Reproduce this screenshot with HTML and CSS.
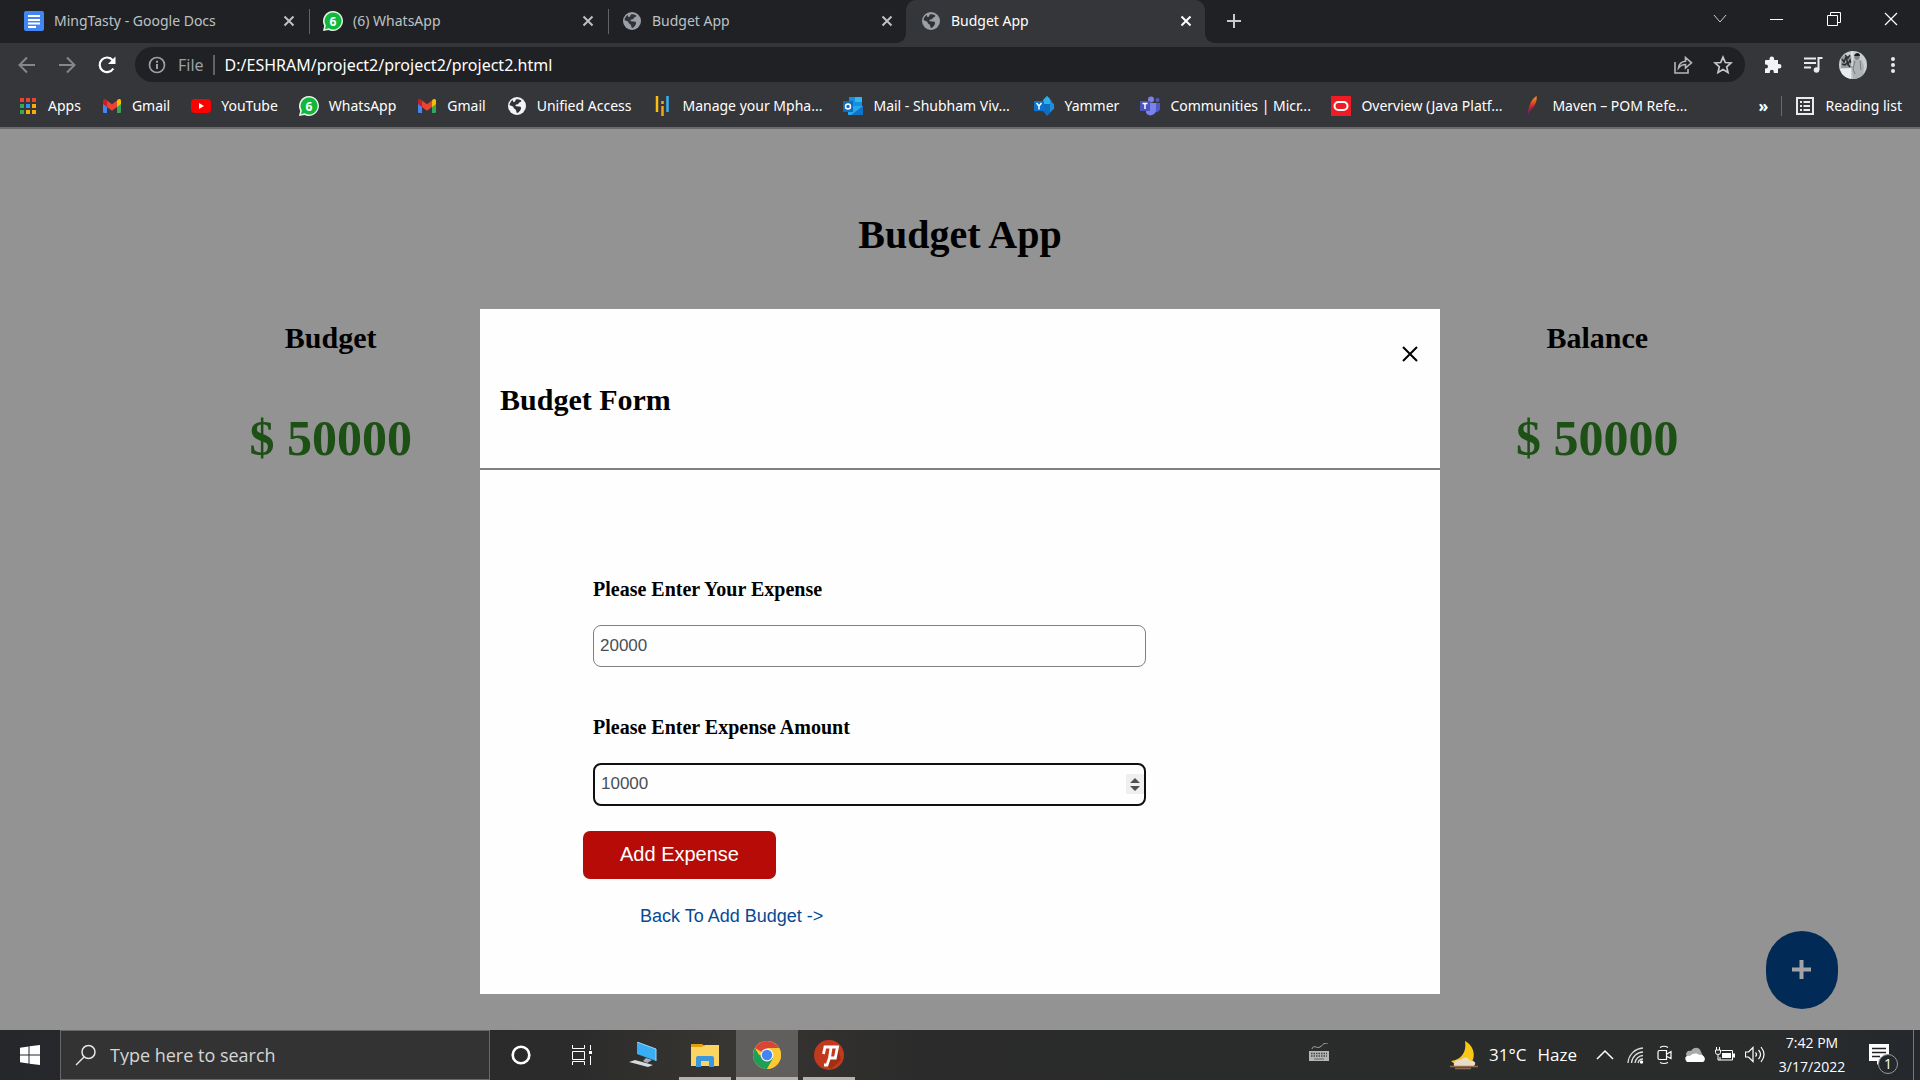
FILE: index.html
```html
<!DOCTYPE html>
<html lang="en">
<head>
<meta charset="utf-8">
<title>Budget App</title>
<link rel="stylesheet" href="styles.css">
</head>
<body>
<svg class="defs" aria-hidden="true">
  <symbol id="x" viewBox="0 0 12 12"><path d="M1.500 1.500l9 9M10.500 1.500l-9 9" fill="none" stroke="currentColor" stroke-width="2"/></symbol>
  <symbol id="globe" viewBox="0 0 20 20"><circle cx="10" cy="10" r="9" fill="currentColor"/><path class="land" d="M9 3.500c2-.8 4.500 0 5.500 1.500-1 1.500-2.500 1-3 2.500-.5 1.300-3 .5-3 2 0 1.200 2 .8 4 1 2.500.3 1.500 3 .5 4.200-1 1-1.500 2.300-3 2.300-1-1-.5-2.500-1.500-3.500s-2-1-2-2.500c-1.500-1-3-1.500-4-2 .3-2 1.500-4 3-5 .8.500 0 2 1.500 2S8 4.500 9 3.500z"/></symbol>
  <symbol id="bubble" viewBox="0 0 20 20"><path d="M10 0a10 10 0 1 1-4.600 18.900L0 20l1.200-5.200A10 10 0 0 1 10 0z" fill="#e8f5ea"/><path d="M10 1.500a8.500 8.500 0 1 1-4.300 15.800L2 18.200l.9-3.700A8.500 8.500 0 0 1 10 1.500z" fill="#12b83c"/></symbol>
  <symbol id="gmail" viewBox="0 0 20 20"><path d="M1 5v11a1 1 0 0 0 1 1h3V8z" fill="#4285f4"/><path d="M19 5v11a1 1 0 0 1-1 1h-3V8z" fill="#34a853"/><path d="M15 4.500V11l4-3V5c0-2-2-2.500-3.400-1.300z" fill="#fbbc04"/><path d="M5 4.500V11L1 8V5c0-2 2-2.500 3.400-1.300z" fill="#c5221f"/><path d="M5 4.500l5 3.800 5-3.800V11l-5 3.800L5 11z" fill="#ea4335"/></symbol>
</svg>

<header class="chrome">
  <div class="tabstrip">
    <ul class="tabs">
      <li class="tab"><svg class="i20" viewBox="0 0 20 20"><rect width="20" height="20" rx="2" fill="#4285f4"/><path d="M4 5h12M4 9h12M4 12.500h12M4 16h8" stroke="#fff" stroke-width="2"/></svg><span>MingTasty - Google Docs</span><button class="close" aria-label="Close tab"><svg viewBox="0 0 12 12"><use href="#x"/></svg></button></li>
      <li class="tab split"><svg class="i20" viewBox="0 0 20 20"><use href="#bubble"/><text x="10" y="14.500" class="count">6</text></svg><span>(6) WhatsApp</span><button class="close" aria-label="Close tab"><svg viewBox="0 0 12 12"><use href="#x"/></svg></button></li>
      <li class="tab split"><svg class="i20 dim"><use href="#globe"/></svg><span>Budget App</span><button class="close" aria-label="Close tab"><svg viewBox="0 0 12 12"><use href="#x"/></svg></button></li>
      <li class="tab active"><svg class="i20 dim"><use href="#globe"/></svg><span>Budget App</span><button class="close" aria-label="Close tab"><svg viewBox="0 0 12 12"><use href="#x"/></svg></button></li>
    </ul>
    <button class="newtab" aria-label="New tab"><svg width="16" height="16"><path d="M8 1v14M1 8h14" stroke="#c8cacc" stroke-width="2"/></svg></button>
    <div class="winctl">
      <button aria-label="Search tabs"><svg width="14" height="14"><path d="M1 3l6 7 6-7" fill="none" stroke="#ccc"/></svg></button>
      <button aria-label="Minimize"><svg width="14" height="14"><path d="M0 7.500h13" stroke="#fff"/></svg></button>
      <button aria-label="Restore"><svg width="14" height="14"><path d="M.5 3.500h10v10H.5zM3.500 3V.5h10v10H11" fill="none" stroke="#fff"/></svg></button>
      <button aria-label="Close"><svg width="14" height="14"><path d="M1 1l12 12M13 1L1 13" stroke="#fff" stroke-width="1.200"/></svg></button>
    </div>
  </div>

  <div class="toolbar">
    <div class="nav">
      <button aria-label="Back"><svg width="20" height="20"><path d="M18 10H3M10 2.500L2.500 10l7.500 7.500" fill="none" stroke="#85878a" stroke-width="2"/></svg></button>
      <button aria-label="Forward"><svg width="20" height="20"><path d="M2 10h15M10 2.500l7.500 7.500-7.500 7.500" fill="none" stroke="#85878a" stroke-width="2"/></svg></button>
      <button aria-label="Reload"><svg width="20" height="20"><path d="M16.300 13.500a7.300 7.300 0 1 1-.6-8.300" fill="none" stroke="#fff" stroke-width="2.200"/><path d="M18.500 1.500V9H11z" fill="#fff"/></svg></button>
    </div>
    <div class="omnibox">
      <svg class="info" width="18" height="18"><circle cx="9" cy="9" r="7.500" fill="none" stroke="#9aa0a6" stroke-width="1.700"/><path d="M9 8v5M9 4.800v2" stroke="#9aa0a6" stroke-width="2"/></svg>
      <span class="scheme">File</span>
      <input class="url" type="text" aria-label="Address" value="D:/ESHRAM/project2/project2/project2.html">
      <button aria-label="Share"><svg width="20" height="20"><path d="M2 7v11h13v-4M5.500 13c.5-4.500 3-6.500 7-6.800V2.500l6 5.300-6 5.200V9.500c-3 0-5 1-7 3.500z" fill="none" stroke="#b4b7ba" stroke-width="1.600"/></svg></button>
      <button aria-label="Bookmark"><svg width="20" height="20"><path d="M10 2.200l2.300 5.300 5.700.5-4.300 3.800 1.300 5.700-5-3-5 3 1.300-5.700L2 8l5.700-.5z" fill="none" stroke="#c4c7ca" stroke-width="1.700"/></svg></button>
    </div>
    <div class="actions">
      <button aria-label="Extensions"><svg width="20" height="20"><path d="M3 5h3.500V3.800a2.300 2.300 0 0 1 4.600 0V5H15v4h1.200a2.300 2.300 0 0 1 0 4.600H15V18h-4.200v-1.200a2 2 0 0 0-4 0V18H2v-4.500h1a2 2 0 0 0 0-4H2V6a1 1 0 0 1 1-1z" fill="#f1f3f4"/></svg></button>
      <button aria-label="Media"><svg width="20" height="20"><path d="M1 3.500h12M1 8h12M1 12.500h7" stroke="#e8eaed" stroke-width="2"/><path d="M15.500 15V3h4" fill="none" stroke="#e8eaed" stroke-width="2"/><circle cx="13.500" cy="15" r="2.800" fill="#e8eaed"/></svg></button>
      <button aria-label="Profile"><svg width="28" height="28" viewBox="0 0 28 28"><clipPath id="av"><circle cx="14" cy="14" r="14"/></clipPath><g clip-path="url(#av)"><rect width="28" height="28" fill="#c9cfd1"/><path d="M2 5h11v12H2z" fill="#9aa0a1"/><path d="M3 8l2 3 2-5 2 7 2-4 1 3M3 13l3 1 2-2 3 4M6 4l3 3 2-3" stroke="#2f3131" stroke-width="1.600" fill="none"/><path d="M1 18l11-1v11H4z" fill="#e8ecee"/><path d="M13 9l5-1 5 1 2 6-1 13H14l-1-8z" fill="#aeb4b6"/><path d="M16 10l-2 8 2 5M21 10l1 9" stroke="#777d80" fill="none"/><circle cx="18" cy="6" r="2.700" fill="#85807d"/><path d="M15 5c1-4 6-4 6 0z" fill="#1c1c1c"/><path d="M13 0v15" stroke="#f2f2f2"/></g></svg></button>
      <button aria-label="Menu"><svg width="20" height="20"><g fill="#e8eaed"><circle cx="10" cy="4" r="2"/><circle cx="10" cy="10" r="2"/><circle cx="10" cy="16" r="2"/></g></svg></button>
    </div>
  </div>

  <nav class="bookmarks">
    <a href="#"><svg class="i20" viewBox="0 0 20 20"><g fill="#ea4335"><path d="M2 2h4v4H2zM8 2h4v4H8zM14 2h4v4h-4z"/></g><path d="M2 8h4v4H2zM2 14h4v4H2z" fill="#34a853"/><path d="M8 8h4v4H8z" fill="#2196f3"/><path d="M14 8h4v4h-4zM8 14h4v4H8zM14 14h4v4h-4z" fill="#fbab05"/></svg>Apps</a>
    <a href="#"><svg class="i20"><use href="#gmail"/></svg>Gmail</a>
    <a href="#"><svg class="i20" viewBox="0 0 20 20"><rect y="3" width="20" height="14" rx="4" fill="#f00"/><path d="M8 7l5 3-5 3z" fill="#fff"/></svg>YouTube</a>
    <a href="#"><svg class="i20" viewBox="0 0 20 20"><use href="#bubble"/><text x="10" y="14.500" class="count">6</text></svg>WhatsApp</a>
    <a href="#"><svg class="i20"><use href="#gmail"/></svg>Gmail</a>
    <a href="#"><svg class="i20 lit"><use href="#globe"/></svg>Unified Access</a>
    <a class="long" href="#"><svg class="i20" viewBox="0 0 20 20"><path d="M5 0v16" stroke="#fbbc14" stroke-width="2.500"/><path d="M15.500 0v16" stroke="#35b0ef" stroke-width="2.500"/><path d="M10.500 5v3M10.500 10v10" stroke="#f2a516" stroke-width="2.500"/></svg>Manage your Mpha...</a>
    <a class="long" href="#"><svg class="i20" viewBox="0 0 20 20"><path d="M6 1h13v9H6z" fill="#1490df"/><path d="M12 1h7v5h-7z" fill="#35b8f1"/><path d="M5 10h15v9H5z" fill="#28a8ea"/><path d="M20 10v9H8z" fill="#1173c6"/><path d="M0 5h10v11H0z" fill="#0f6cbd"/><circle cx="5" cy="10.500" r="2.500" fill="none" stroke="#fff" stroke-width="1.500"/></svg>Mail - Shubham Viv...</a>
    <a href="#"><svg class="i20" viewBox="0 0 20 20"><path d="M13 0l5 5v10l-5 5-4-5V5z" fill="#106ebe"/><path d="M13 0l3 3 1 5H9V4z" fill="#2bb1ea"/><path d="M16 5l4 3v5l-4 3z" fill="#1a8fe0"/><path d="M0 5h10v10H0z" fill="#0a72d0"/><path d="M2.500 7L5 10l2.500-3M5 10v3.500" stroke="#fff" stroke-width="1.500" fill="none"/></svg>Yammer</a>
    <a class="long" href="#"><svg class="i20" viewBox="0 0 20 20"><circle cx="11" cy="3.500" r="3" fill="#7b83eb"/><circle cx="17.500" cy="4" r="2" fill="#5059c9"/><path d="M14 7h6v6a4 4 0 0 1-5 3z" fill="#5059c9"/><path d="M6 7h10v7a5.500 5.500 0 0 1-10 3z" fill="#7b83eb"/><path d="M0 5h10v10H0z" fill="#4b53bc"/><path d="M2.500 7.500h5M5 7.500v5.500" stroke="#fff" stroke-width="1.500"/></svg>Communities | Micr...</a>
    <a class="long" href="#"><svg class="i20" viewBox="0 0 20 20"><path d="M0 0h20v20H0z" fill="#ee1c25"/><rect x="3.500" y="6" width="13" height="8" rx="4" fill="none" stroke="#fff" stroke-width="2"/></svg>Overview (Java Platf...</a>
    <a class="long" href="#"><svg class="i20" viewBox="0 0 20 20"><linearGradient id="fe" x1="0" y1="1" x2="0" y2="0"><stop stop-color="#4a1f8c"/><stop offset=".45" stop-color="#c8202f"/><stop offset="1" stop-color="#f59a22"/></linearGradient><path d="M14.500 0c1.500 5-3 12-7 15.500L6 20c-.5-8 3-17 8.500-20z" fill="url(#fe)"/></svg>Maven – POM Refe...</a>
    <button class="more" aria-label="More bookmarks">»</button>
    <a class="reading" href="#"><svg class="i20" viewBox="0 0 20 20"><path d="M2 2h16v16H2z" fill="none" stroke="#e8eaed" stroke-width="2"/><path d="M5 6h2M5 10h2M5 14h2M8.500 6H15M8.500 10H15M8.500 14H15" stroke="#e8eaed" stroke-width="2"/></svg>Reading list</a>
  </nav>
</header>

<main class="page">
  <h1>Budget App</h1>
  <div class="totals">
    <section><h2>Budget</h2><p>$ 50000</p></section>
    <section class="last"><h2>Balance</h2><p>$ 50000</p></section>
  </div>
  <button class="fab" aria-label="Add"><svg width="19" height="19"><path d="M9.500 0v19M0 9.500h19" stroke="#a3a3a3" stroke-width="4"/></svg></button>

  <div class="modal" role="dialog" aria-labelledby="form-title">
    <div class="modal-head">
      <button class="dismiss" aria-label="Close"><svg width="16" height="16"><path d="M1 1l14 14M15 1L1 15" stroke="#000" stroke-width="2"/></svg></button>
      <h2 id="form-title">Budget Form</h2>
    </div>
    <form class="modal-body">
      <label for="expense">Please Enter Your Expense</label>
      <input id="expense" type="text" value="20000">
      <label for="amount">Please Enter Expense Amount</label>
      <input id="amount" class="current" type="number" value="10000">
      <button class="submit" type="button">Add Expense</button>
      <a class="back" href="#">Back To Add Budget -&gt;</a>
    </form>
  </div>
</main>

<footer class="taskbar">
  <button class="start" aria-label="Start"><svg width="20" height="20"><path d="M0 2.800L8.500 1.500v8H0zM9.500 1.300L20 0v9.500H9.500zM0 10.500h8.500v8L0 17.300zM9.500 10.500H20V20L9.500 18.700z" fill="#fff"/></svg></button>
  <label class="search"><svg width="22" height="22"><circle cx="13.500" cy="8" r="6.500" fill="none" stroke="#e6e6e6" stroke-width="1.500"/><path d="M9 13l-8 8" stroke="#e6e6e6" stroke-width="1.500"/></svg><input type="text" placeholder="Type here to search" aria-label="Search"></label>
  <div class="apps">
    <button class="sys" aria-label="Cortana"><svg width="20" height="20"><circle cx="10" cy="10" r="8.300" fill="none" stroke="#fff" stroke-width="2.600"/></svg></button>
    <button class="sys" aria-label="Task view"><svg width="20" height="20"><path d="M.5 0v3.500h12V0M.5 6.500h12v8H.5zM.5 20v-3.500h12V20M18.500 0v5M18.500 11v9" fill="none" stroke="#fff"/><path d="M17 6h3v3h-3z" fill="#fff"/></svg></button>
    <button aria-label="This PC"><svg width="28" height="26"><path d="M8 0l19 7v12L8 12z" fill="#39aef5"/><path d="M8 0l19 7v12" fill="none" stroke="#9fd8f5"/><path d="M17 16l6 2-5 3-4-2z" fill="#9fb0ba"/><path d="M0 20l6-2 18 5-5 2z" fill="#d5dbe0"/></svg></button>
    <button class="open" aria-label="File Explorer"><svg width="28" height="24"><path d="M0 1h11l3 2v6H0z" fill="#e2a10a"/><path d="M0 4h11l3-2h14v21H0z" fill="#fcd462"/><path d="M5 24V15q0-2 2-2h14q2 0 2 2v9h-5v-6h-8v6z" fill="#3a96dd"/></svg></button>
    <button class="open current" aria-label="Chrome"><svg width="28" height="28" viewBox="0 0 28 28"><circle cx="14" cy="14" r="14" fill="#fcc934"/><path d="M14 14L1.900 7A14 14 0 0 1 26.100 7z" fill="#db4437"/><path d="M1.900 7A14 14 0 0 0 14 28l6.100-10.500L14 14H6z" fill="#1e9e57"/><path d="M14 7h12.100a14 14 0 0 1-12.100 21l6-10.500z" fill="#fcc934"/><circle cx="14" cy="14" r="6.500" fill="#f5f5f5"/><circle cx="14" cy="14" r="5.200" fill="#4285f4"/></svg></button>
    <button class="open" aria-label="Psiphon"><svg width="30" height="30"><circle cx="15" cy="15" r="15" fill="#c23a1d"/><path d="M24 8l3 12-10 9-4-3 3-8h5z" fill="#a02f13"/><path d="M9.500 14l1.500-7h12.500l-2.200 11H15M17 8l-1.500 10L13 25h-3" fill="none" stroke="#fff" stroke-width="2.800"/></svg></button>
  </div>
  <button class="keyboard" aria-label="Keyboard"><svg width="20" height="20"><path d="M3 6c1-5 5 0 8-2s3-4 8-4" fill="none" stroke="#aaa"/><path d="M0 8h20v10H0z" fill="#b5b5b5"/><path d="M2 10.500h16M2 13h16" stroke="#444" stroke-width="1.500" stroke-dasharray="1.500 1"/><path d="M5 16h10" stroke="#666"/></svg></button>
  <button class="weather"><svg width="28" height="30"><path d="M15 1c11 6 11 19 4 24-7 3-14 0-18-4 10-1 16-9 14-20z" fill="#f9c816"/><path d="M4 26c-1-4 3-7 7-6 3-4 8-3 9 1 4-1 7 2 4 5z" fill="#eadbc9"/><path d="M0 26.500h28M5 28.500h16" stroke="#8e6c52" stroke-width="1.500"/></svg><span>31°C</span><span>Haze</span></button>
  <div class="tray">
    <button aria-label="Show hidden icons"><svg width="18" height="20"><path d="M1 14l8-8 8 8" fill="none" stroke="#fff" stroke-width="1.500"/></svg></button>
    <button aria-label="Network"><svg width="18" height="20"><g fill="none" stroke="#ddd" stroke-width="1.300"><path d="M2 18A16 16 0 0 1 17 3M5.500 18A12 12 0 0 1 17 7M9 18A8.500 8.500 0 0 1 17 10.500M12 18a5 5 0 0 1 5-4"/></g><circle cx="15.500" cy="17" r="1.700" fill="#fff"/></svg></button>
    <button aria-label="Meet now"><svg width="18" height="20"><path d="M3.500 5.500h7v9h-7q-1.500 0-1.500-1.500V7q0-1.500 1.500-1.500zM11 9l4-2.500v7L11 11.500M4 2.500Q8 0 12 2.500M4 17.500q4 2 8 0" fill="none" stroke="#fff" stroke-width="1.200"/></svg></button>
    <button aria-label="OneDrive"><svg width="20" height="20"><path d="M1 10c0-4 3-5 5-4 3-5 9-4 10 1l2 4H2z" fill="#aaa"/><path d="M2 17c-3-3-2-7 3-6 3-3 7-3 9-1 5-2 8 5 4 7z" fill="#fff"/></svg></button>
    <button aria-label="Battery"><svg width="20" height="20"><path d="M6.500 5.500h11v9.500H5V12" fill="none" stroke="#fff"/><path d="M7 8h9v5H7zM18 8.500h2v4h-2z" fill="#fff"/><path d="M1.500 2v3M4.500 2v3M.5 5h5v2.500q0 2-2.500 2t-2.500-2zM3 10v5h2" fill="none" stroke="#fff"/></svg></button>
    <button aria-label="Volume"><svg width="20" height="20"><path d="M.5 7h3L8 2.500v14L3.500 12h-3zM10.500 7.500q2 2 0 4M13.500 5q4 4.500 0 9M16 2q6 7.500 0 15" fill="none" stroke="#fff" stroke-width="1.200"/></svg></button>
  </div>
  <button class="clock"><span>7:42 PM</span><span>3/17/2022</span></button>
  <button class="notice" aria-label="Notifications"><svg width="20" height="22"><path d="M0 0h20v17h-8l-4 4v-4H0z" fill="#fff"/><path d="M3 4.500h14M3 8.500h14M3 12.500h8" stroke="#222" stroke-width="1.300"/></svg><span class="badge">1</span></button>
</footer>
</body>
</html>
```
FILE: styles.css
```css
* { box-sizing: border-box; }
body {
  margin: 0;
  min-height: 100vh;
  display: flex;
  flex-direction: column;
  font-family: "Noto Sans", "Open Sans", sans-serif;
  font-size: 14px;
  line-height: 20px;
  color: #fff;
}
button { border: 0; padding: 0; margin: 0; background: none; color: inherit; font: inherit; display: flex; align-items: center; justify-content: center; }
input { font: inherit; color: inherit; min-width: 0; }
a { color: inherit; text-decoration: none; }
h1, h2, p, ul { margin: 0; padding: 0; }
svg { flex: none; display: block; }
.defs { position: absolute; width: 0; height: 0; }
.i20 { width: 20px; height: 20px; }
.dim { color: #9aa0a6; }
.lit { color: #f1f3f4; }
.land { fill: #303236; }
.count { font: bold 12px "Open Sans", sans-serif; fill: #fff; text-anchor: middle; }

.chrome { background: #35363a; border-bottom: 2px solid #6a6b6e; }
.tabstrip { display: flex; height: 43px; background: #202124; }
.tabs { display: flex; list-style: none; padding-left: 9px; }
.tab { position: relative; width: 299px; display: flex; align-items: center; gap: 10px; padding: 0 13px 2px 15px; color: #bdc1c6; }
.tab span { flex: 1; white-space: nowrap; }
.split::before { content: ""; position: absolute; left: 1px; top: 9px; width: 1px; height: 25px; background: #5f6368; }
.tab.active { background: #35363a; color: #fff; border-radius: 10px 10px 0 0; }
.tab.active::before, .tab.active::after { content: ""; position: absolute; bottom: 0; width: 10px; height: 10px; }
.tab.active::before { left: -10px; background: radial-gradient(circle at 0 0, #202124 10px, #35363a 10px); }
.tab.active::after { right: -10px; background: radial-gradient(circle at 100% 0, #202124 10px, #35363a 10px); }
.close { width: 12px; height: 12px; }
.close svg { width: 12px; height: 12px; }
.newtab { width: 57px; padding-bottom: 1px; }
.winctl { display: flex; margin-left: auto; padding: 0 1px 6px 0; }
.winctl button { width: 57px; }

.toolbar { display: flex; align-items: center; height: 43px; }
.nav { display: flex; width: 135px; padding: 0 7px; }
.nav button { width: 40px; height: 36px; }
.omnibox { flex: 1; display: flex; align-items: center; height: 35px; padding: 0 2px 0 13px; border-radius: 18px; background: #202124; font-size: 16px; }
.scheme { margin: 0 9px 0 12px; color: #9aa0a6; }
.url { flex: 1; border: 0; border-left: 2px solid #5f6368; padding: 0 0 0 10px; height: 20px; background: none; color: #fff; }
.omnibox button { width: 40px; height: 34px; }
.actions { display: flex; padding: 0 7px 0 8px; }
.actions button { width: 40px; height: 36px; }

.bookmarks { display: flex; align-items: center; gap: 21px; height: 41px; padding: 0 18px 2px; white-space: nowrap; }
.bookmarks a { display: flex; align-items: center; gap: 10px; }
.bookmarks .long { width: 170px; }
.bookmarks .more { margin-left: auto; font-size: 16px; font-weight: 700; }
.bookmarks .reading { margin-left: -8px; padding-left: 13px; border-left: 1px solid #6a6b6e; }

.page { position: relative; flex: 1; padding-top: 78px; background: #939393; color: #000; font-family: "Liberation Serif", serif; }
h1 { text-align: center; font-size: 40px; line-height: 56px; }
.totals { display: grid; grid-template-columns: repeat(3, 1fr); padding: 55px 6px 0 14px; text-align: center; }
.last { grid-column: 3; }
h2 { font-size: 30px; line-height: 40px; }
.totals p { margin-top: 50px; font-size: 50px; line-height: 60px; font-weight: 700; color: #1d5014; }
.fab { position: absolute; right: 82px; bottom: 21px; width: 72px; height: 78px; padding: 0 1px 2px 0; border-radius: 36px; background: #022a56; }

.modal { position: absolute; top: 180px; left: 25%; width: 50%; background: #fefefe; }
.modal-head { padding: 35px 20px 48px; border-bottom: 2px solid #808080; }
.dismiss { margin-left: auto; width: 20px; height: 20px; }
.modal-head h2 { margin-top: 16px; }
.modal-body { display: flex; flex-direction: column; align-items: flex-start; padding: 107px 103px 66px; }
.modal-body label { margin: 0 10px 24px; font-size: 20px; line-height: 24px; font-weight: 700; }
.modal-body input { width: 553px; max-width: 100%; height: 42px; margin: 0 10px 48px; padding: 0 6px 1px; border: 1px solid #808080; border-radius: 8px; background: #fefefe; font: 17px "Liberation Sans", sans-serif; color: #4a4f55; }
.modal-body .current { height: 43px; margin-bottom: 25px; padding-right: 0; border: 2px solid #101010; }
.current::-webkit-inner-spin-button {
  appearance: none;
  width: 18px;
  height: 20px;
  margin: 0;
  opacity: 1;
  background: #efefef url("data:image/svg+xml,%3Csvg xmlns='http://www.w3.org/2000/svg' width='18' height='20'%3E%3Cpath d='M4 9l5-5 5 5zM4 12h10l-5 5z' fill='%23505050'/%3E%3C/svg%3E") no-repeat;
}
.submit { width: 193px; height: 48px; border-radius: 7px; background: #b70b07; color: #fff; font: 20px "Liberation Sans", sans-serif; padding-bottom: 2px; }
.back { margin: 25px 57px 0; font: 18px/24px "Liberation Sans", sans-serif; color: #054a95; }

.taskbar { display: flex; height: 50px; font-family: "Open Sans", "Noto Sans", sans-serif; background: linear-gradient(90deg, #25272a, #2b2b2b 30%, #383632 38%, #2b2b2b 48%, #2a2c2c 92%, #25282c); }
.start { width: 60px; }
.search { display: flex; align-items: center; gap: 13px; width: 430px; padding-left: 14px; border: 1px solid #686868; background: #333; }
.search input { flex: 1; border: 0; padding: 0; background: none; font-size: 18px; }
.search input::placeholder { color: #d6d6d6; opacity: 1; }
.apps { display: flex; }
.apps button { position: relative; width: 62px; }
.apps .sys { width: 61px; }
.open::after { content: ""; position: absolute; left: 5px; right: 5px; bottom: 0; height: 3px; background: #b5b1b0; }
.apps .current { background: #605f5d; }
.apps .current::after { left: 0; right: 0; }
.keyboard { margin-left: auto; width: 20px; padding-bottom: 4px; }
.weather { gap: 11px; margin-left: 121px; font-size: 17px; }
.tray { display: flex; margin-left: 13px; }
.tray button { width: 30px; }
.clock { flex-direction: column; width: 84px; line-height: 22px; gap: 2px; }
.notice { position: relative; width: 60px; padding-right: 10px; margin-right: 6px; border-right: 1px solid #777; }
.badge { position: absolute; left: 24px; top: 24px; width: 20px; height: 20px; border: 1px solid #999; border-radius: 50%; background: #25282c; line-height: 18px; }
```
